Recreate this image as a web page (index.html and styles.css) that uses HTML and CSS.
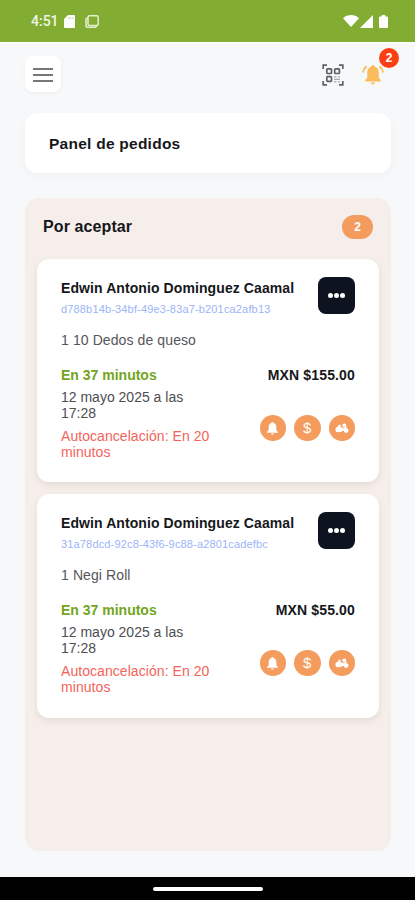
FILE: index.html
```
<!DOCTYPE html>
<html lang="es">
<head>
  <meta charset="UTF-8">
  <meta name="viewport" content="width=device-width, initial-scale=1">
  <title>Panel de pedidos</title>
  <link rel="stylesheet" href="styles.css">
</head>
<body>
  <!-- Shared icons -->
  <svg class="icon-defs">
    <symbol id="icon-bell" viewBox="0 0 16 16">
      <path d="M8 1c.7 0 1.1.5 1.1 1.1 2 .5 3 2.1 3 4.4v3.3l1.7 1.8v.9H2.2v-.9l1.7-1.8V6.500C3.900 4.200 4.900 2.600 6.900 2.100 6.900 1.500 7.300 1 8 1zM6.500 13.200h3a1.500 1.500 0 0 1-3 0z"/>
    </symbol>
    <symbol id="icon-moto" viewBox="0 0 20 16">
      <path d="M5 2.500h3v4h3l1.500-1-1.800-1.500v-2.500h4.500l1.500 6 2 2-1.500 2h-7l-1 1.500H1.500z"/>
      <circle cx="4.500" cy="9.500" r="4"/>
      <circle cx="16" cy="11" r="3.400"/>
      <circle cx="13.500" cy="3.300" r="2.500"/>
      <path d="M11.500 7.500l2.500-2" stroke="#f39c5d" stroke-width="1.300"/>
    </symbol>
  </svg>

  <div class="status-bar">
    <div class="status-left">
      <span class="clock">4:51</span>
      <svg width="11" height="13" viewBox="0 0 11 13"><path d="M4 0h6a1 1 0 0 1 1 1v11a1 1 0 0 1-1 1H1a1 1 0 0 1-1-1V4z" fill="#fff"/><path d="M4.700 2v2M6.700 2v2M8.700 2v2" stroke="#c5dba1" stroke-width="1"/></svg>
      <svg width="14" height="13" viewBox="0 0 14 13" fill="none" stroke="#e3efcf" stroke-width="1.500"><rect x="3" y=".8" width="10.200" height="9.700" rx="1.500"/><path d="M3 2.500 1 4v7.200l1 1h8.500l1.500-1.700"/></svg>
    </div>
    <div class="status-right">
      <svg width="16" height="12" viewBox="0 0 16 12" fill="#fff"><path d="M0 3.200C4.500-1 11.500-1 16 3.200L8 12z"/></svg>
      <svg width="13" height="13" viewBox="0 0 13 13" fill="#fff"><path d="M13 0v13H0z"/></svg>
      <svg width="9" height="13" viewBox="0 0 9 13" fill="#fff"><path d="M2.700 0h3.600v1.400H8a1 1 0 0 1 1 1V12a1 1 0 0 1-1 1H1a1 1 0 0 1-1-1V2.400a1 1 0 0 1 1-1h1.700z"/></svg>
    </div>
  </div>

  <header class="top-bar">
    <button class="menu-button" aria-label="Menú">
      <span></span><span></span><span></span>
    </button>
    <div class="top-actions">
      <svg class="qr-icon" width="22" height="22" viewBox="0 0 22 22" fill="none" stroke="#5d6166" stroke-width="1.700">
        <path d="M1.200 5V1.200H5M17 1.200h3.800V5M20.800 17v3.800H17M5 20.800H1.200V17"/>
        <rect x="4.800" y="4.800" width="4.700" height="4.700" rx=".8"/>
        <rect x="12.700" y="4.800" width="4.700" height="4.700" rx=".8"/>
        <rect x="4.800" y="12.700" width="4.700" height="4.700" rx=".8"/>
        <path d="M12 12.800h2.500m1.500 0h2M12 15.300h6M12 17.800h2.500m1.500 0h2" stroke="#a3a6aa" stroke-width="1.300"/>
      </svg>
      <div class="notifications">
        <svg width="22" height="20" viewBox="0 0 22 20">
          <path d="M11 0c.9 0 1.500.6 1.500 1.500 2.800.7 4.200 2.900 4.200 5.800v5.200l2 2.400v1.600H3.300v-1.600l2-2.400V7.300c0-2.900 1.400-5.100 4.200-5.800C9.500.6 10.100 0 11 0zM9 17.500h4a2 2 0 0 1-4 0z" fill="#fdbc5b"/>
          <path d="M4.600 1.200C2.500 2.800 1.300 4.900 1 7.500M17.400 1.200C19.500 2.800 20.700 4.900 21 7.500" fill="none" stroke="#fdbc5b" stroke-width="1.800"/>
        </svg>
        <span class="badge">2</span>
      </div>
    </div>
  </header>

  <main>
    <h1 class="page-title">Panel de pedidos</h1>

    <section class="board">
      <div class="board-header">
        <h2>Por aceptar</h2>
        <span class="board-count">2</span>
      </div>

      <article class="order">
        <div class="order-top">
          <div>
            <h3>Edwin Antonio Dominguez Caamal</h3>
            <p class="order-id">d788b14b-34bf-49e3-83a7-b201ca2afb13</p>
          </div>
          <button class="more" aria-label="Opciones"><i></i><i></i><i></i></button>
        </div>
        <p class="items">1 10 Dedos de queso</p>
        <div class="order-bottom">
          <div class="times">
            <p class="eta">En 37 minutos</p>
            <p class="date">12 mayo 2025 a las 17:28</p>
            <p class="cancel">Autocancelación: En 20 minutos</p>
          </div>
          <div class="summary">
            <p class="price">MXN $155.00</p>
            <div class="tags">
              <span><svg width="15" height="15"><use href="#icon-bell"/></svg></span>
              <span>$</span>
              <span><svg width="14" height="11"><use href="#icon-moto"/></svg></span>
            </div>
          </div>
        </div>
      </article>

      <article class="order">
        <div class="order-top">
          <div>
            <h3>Edwin Antonio Dominguez Caamal</h3>
            <p class="order-id">31a78dcd-92c8-43f6-9c88-a2801cadefbc</p>
          </div>
          <button class="more" aria-label="Opciones"><i></i><i></i><i></i></button>
        </div>
        <p class="items">1 Negi Roll</p>
        <div class="order-bottom">
          <div class="times">
            <p class="eta">En 37 minutos</p>
            <p class="date">12 mayo 2025 a las 17:28</p>
            <p class="cancel">Autocancelación: En 20 minutos</p>
          </div>
          <div class="summary">
            <p class="price">MXN $55.00</p>
            <div class="tags">
              <span><svg width="15" height="15"><use href="#icon-bell"/></svg></span>
              <span>$</span>
              <span><svg width="14" height="11"><use href="#icon-moto"/></svg></span>
            </div>
          </div>
        </div>
      </article>
    </section>
  </main>

  <div class="nav-bar"><span></span></div>
</body>
</html>
```
FILE: styles.css
```
* {
  box-sizing: border-box;
}
body {
  margin: 0;
  height: 900px;
  display: flex;
  flex-direction: column;
  overflow: hidden;
  font-family: "Liberation Sans", Arial, sans-serif;
  background: #f6f8fa;
  color: #16171b;
}
h1, h2, h3, p {
  margin: 0;
}
button {
  border: none;
  padding: 0;
}
.icon-defs {
  position: absolute;
  width: 0;
  height: 0;
}
/* Status bar */
.status-bar {
  height: 43px;
  padding: 0 27px 0 31px;
  display: flex;
  justify-content: space-between;
  align-items: center;
  background: #82ad32;
  border-bottom: 1px solid #fff;
}
.status-left {
  display: flex;
  align-items: center;
}
.clock {
  width: 33px;
  font: 500 14px/18px Roboto, sans-serif;
  color: #f0f6e6;
}
.status-left svg + svg {
  margin-left: 10px;
}
.status-right {
  display: flex;
  align-items: center;
  gap: 6px;
}
.status-right svg:first-child {
  margin-right: -5px;
}
/* Header */
.top-bar {
  height: 70px;
  padding: 13px 31px 0 25px;
  display: flex;
  justify-content: space-between;
  align-items: flex-start;
}
.menu-button {
  width: 36px;
  height: 36px;
  border-radius: 8px;
  background: #fff;
  box-shadow: 0 1px 4px rgba(0,0,0,0.04);
  display: flex;
  flex-direction: column;
  align-items: center;
  justify-content: center;
  gap: 4px;
  padding-top: 1px;
}
.menu-button span {
  width: 20px;
  height: 2px;
  background: #77777a;
}
.top-actions {
  display: flex;
  gap: 18px;
  padding-top: 8px;
}
.notifications {
  position: relative;
  height: 22px;
  padding-top: 1px;
}
.badge {
  position: absolute;
  top: -16px;
  left: 17px;
  width: 20px;
  height: 20px;
  border-radius: 50%;
  background: #fb3f12;
  color: #fff;
  font-size: 12px;
  font-weight: bold;
  line-height: 20px;
  text-align: center;
}
/* Page content */
main {
  flex: 1;
  padding: 0 24px 26px 25px;
  display: flex;
  flex-direction: column;
  gap: 25px;
}
.page-title {
  height: 60px;
  padding-left: 24px;
  border-radius: 12px;
  background: #fff;
  box-shadow: 0 3px 9px rgba(0,0,0,0.03);
  font-size: 15.5px;
  line-height: 61px;
  letter-spacing: 0.25px;
}
.board {
  flex: 1;
  padding: 17px 12px 0;
  border-radius: 14px;
  background: #f6eeea;
}
.board-header {
  height: 24px;
  margin-bottom: 20px;
  padding: 0 6px;
  display: flex;
  justify-content: space-between;
  align-items: center;
}
.board-header h2 {
  font-size: 16px;
  letter-spacing: 0.1px;
}
.board-count {
  width: 31px;
  height: 24px;
  border-radius: 12px;
  background: #f39c5d;
  color: #fff;
  font-size: 12px;
  font-weight: bold;
  line-height: 24px;
  text-align: center;
}
/* Order cards */
.order {
  height: 223px;
  margin-bottom: 12px;
  padding: 18px 24px 0;
  border-radius: 12px;
  background: #fff;
  box-shadow: 0 3px 7px rgba(60,40,20,0.09);
  font-size: 14px;
  line-height: 16px;
}
.order + .order {
  height: 224px;
}
.order-top {
  height: 54px;
  display: flex;
  justify-content: space-between;
  white-space: nowrap;
}
.order h3 {
  padding-top: 2px;
  font-size: 14px;
  line-height: 18px;
  letter-spacing: 0.09px;
}
.order-id {
  margin-top: 5px;
  font-size: 11px;
  line-height: 14px;
  letter-spacing: 0.16px;
  color: #9bb4f8;
}
.more {
  width: 37px;
  height: 37px;
  flex: none;
  border-radius: 8px;
  background: #0d1420;
  display: flex;
  align-items: center;
  justify-content: center;
  gap: 1px;
}
.more i {
  width: 5px;
  height: 5px;
  border-radius: 50%;
  background: #fff;
}
.items {
  height: 36px;
  color: #55565a;
  line-height: 18px;
  letter-spacing: 0.1px;
}
.order-bottom {
  display: flex;
  justify-content: space-between;
}
.times {
  width: 160px;
}
.eta {
  margin-bottom: 6px;
  color: #72a51d;
  font-weight: bold;
}
.date {
  width: 130px;
  margin-bottom: 7px;
  color: #4d4e52;
}
.cancel {
  color: #f2645a;
  letter-spacing: 0.06px;
}
.summary {
  display: flex;
  flex-direction: column;
  align-items: flex-end;
}
.price {
  font-weight: bold;
  white-space: nowrap;
  letter-spacing: 0.15px;
}
.tags {
  margin-top: 32px;
  display: flex;
  gap: 8px;
}
.tags span {
  width: 26.500px;
  height: 26px;
  border-radius: 50%;
  background: #f39c5d;
  color: #fff;
  fill: #fff;
  font-size: 15px;
  display: flex;
  align-items: center;
  justify-content: center;
}
/* System navigation */
.nav-bar {
  height: 23px;
  background: #000;
  display: flex;
  justify-content: center;
  align-items: center;
}
.nav-bar span {
  width: 110px;
  height: 4px;
  border-radius: 2px;
  background: #fff;
}
```
